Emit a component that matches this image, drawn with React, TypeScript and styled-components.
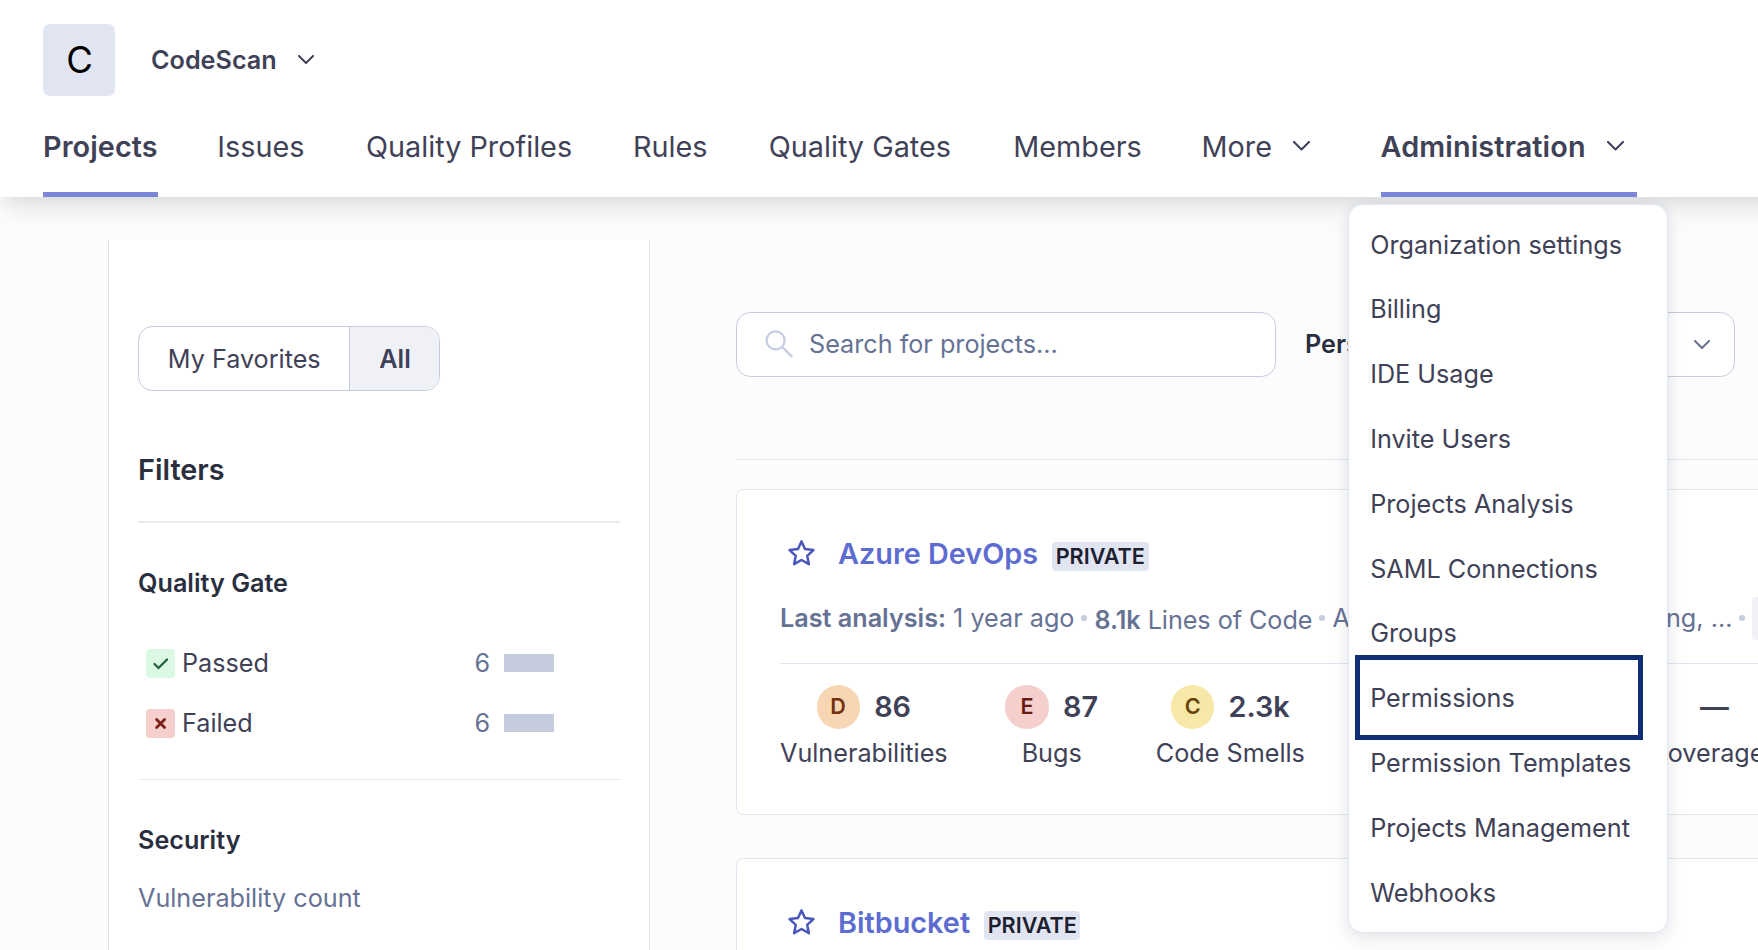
import React from 'react';
import styled, { createGlobalStyle, css } from 'styled-components';

const GlobalStyle = createGlobalStyle`
  *, *::before, *::after { box-sizing: border-box; }
  html, body { margin: 0; padding: 0; }
  body {
    width: 1758px;
    height: 950px;
    overflow: hidden;
    background: #fcfcfd;
    font-family: Inter, "Liberation Sans", sans-serif;
    font-size: 25.2px;
    line-height: 36px;
    color: #3f4257;
  }
`;

const Page = styled.div`
  width: 1758px;
  height: 950px;
  overflow: hidden;
  display: flex;
  flex-direction: column;
`;

const Header = styled.header`
  flex: none;
  width: 1820px;
  height: 197px;
  background: #fff;
  padding: 24px 43px 0;
  box-shadow: 0 20px 25px -5px rgba(29, 33, 47, 0.05), 0 8px 20px -5px rgba(29, 33, 47, 0.13);
  display: flex;
  flex-direction: column;
  justify-content: space-between;
  position: relative;
  z-index: 1;
`;

const OrgRow = styled.div`
  display: flex;
  align-items: center;
  height: 72px;
`;

const OrgLogo = styled.div`
  width: 72px;
  height: 72px;
  padding-left: 1px;
  border-radius: 7px;
  background: #e1e5f2;
  color: #000;
  font-size: 36.5px;
  display: flex;
  align-items: center;
  justify-content: center;
`;

const OrgName = styled.span`
  margin: 0 21px 0 36px;
  font-weight: 600;
`;

const Nav = styled.nav`
  display: flex;
  height: 101px;
`;

const NavItem = styled.a<{ $active?: boolean; $gap?: number }>`
  position: relative;
  display: flex;
  align-items: center;
  height: 101px;
  margin-right: ${(p) => p.$gap ?? 57.6}px;
  font-size: 28.8px;
  white-space: nowrap;
  border-bottom: 5px solid ${(p) => (p.$active ? '#7b87d6' : 'transparent')};
  font-weight: ${(p) => (p.$active ? 600 : 400)};
`;

const NavLabel = styled.span<{ $wide?: boolean }>`
  display: block;
  margin-top: 5px;
  ${(p) => p.$wide && css`letter-spacing: 0.1px;`}
`;

const NavChevron = styled.span`
  display: flex;
  margin: 3px 13px 0 21px;
`;

const Menu = styled.div`
  position: absolute;
  z-index: 2;
  left: -33px;
  top: 108px;
  width: 320px;
  padding: 7.2px 0;
  background: #fff;
  border: 1px solid #e1e6f3;
  border-radius: 14.4px;
  box-shadow: 0 8px 22px rgba(29, 33, 47, 0.08), 0 2px 12px rgba(29, 33, 47, 0.06);
  font-size: 25.2px;
  font-weight: 400;
`;

const MenuItem = styled.div`
  display: flex;
  align-items: center;
  height: 64.8px;
  padding-left: 21.6px;
  position: relative;
`;

const Highlight = styled.span`
  position: absolute;
  left: 6px;
  top: -11px;
  width: 288px;
  height: 85px;
  border: 5px solid #102d75;
`;

const Body = styled.div`
  flex: 1;
  display: flex;
  min-height: 0;
`;

const Sidebar = styled.aside`
  flex: none;
  width: 542px;
  margin: 43px 0 0 108px;
  padding: 86px 29px 0;
  background: #fff;
  border: solid #e1e3f0;
  border-width: 0 1px;
`;

const Toggle = styled.div`
  display: inline-flex;
  height: 65px;
  border: 1px solid #c5cddf;
  border-radius: 14.4px;
  overflow: hidden;
  vertical-align: top;
`;

const ToggleOption = styled.span<{ $selected?: boolean }>`
  display: flex;
  align-items: center;
  padding: 0 28.8px;
  ${(p) =>
    p.$selected &&
    css`
      padding-right: 28px;
      background: #f0f1f7;
      border-left: 1px solid #c5cddf;
      font-weight: 600;
    `}
`;

const FiltersTitle = styled.h2`
  margin: 61px 0 0;
  font-size: 28.8px;
  line-height: 36px;
  font-weight: 600;
  color: #2a2f40;
`;

const Rule = styled.hr<{ $thick?: boolean; $top: number }>`
  height: ${(p) => (p.$thick ? 2 : 1)}px;
  margin: ${(p) => p.$top}px 0 0;
  border: 0;
  background: #e9eaec;
`;

const FacetTitle = styled.h3`
  margin: 42px 0 0;
  font-size: 25.2px;
  line-height: 36px;
  font-weight: 600;
  color: #2a2f40;
`;

const FacetList = styled.div`
  margin-top: 32px;
`;

const FacetRow = styled.div`
  display: flex;
  align-items: center;
  height: 60px;
  padding: 0 66px 0 8px;
`;

const GateIcon = styled.span<{ $ok?: boolean }>`
  width: 29px;
  height: 29px;
  border-radius: 4px;
  background: ${(p) => (p.$ok ? '#dbf9e2' : '#f5cfcb')};
  display: flex;
  margin-right: 7px;
`;

const Count = styled.span`
  margin-left: auto;
  color: #667294;
`;

const Bar = styled.span`
  width: 50px;
  height: 18px;
  margin-left: 14px;
  background: #c5ccdd;
`;

const Subdued = styled.div`
  margin-top: 22px;
  color: #667294;
`;

const Main = styled.main`
  flex: none;
  width: 1200px;
  margin-left: 86px;
  padding-top: 115px;
`;

const Controls = styled.div`
  display: flex;
  align-items: center;
  height: 65px;
`;

const SearchBox = styled.div`
  display: flex;
  align-items: center;
  gap: 16px;
  width: 540px;
  height: 65px;
  padding: 0 0 1px 28px;
  border: 1px solid #c5cddf;
  border-radius: 14.4px;
  background: #fff;
  color: #667294;
`;

const ControlLabel = styled.span`
  width: 179px;
  margin: -2px 0 0 29px;
  font-weight: 600;
  color: #2a2f40;
`;

const Select = styled.div`
  display: flex;
  align-items: center;
  justify-content: space-between;
  width: 251px;
  height: 65px;
  padding: 0 24px 0 28px;
  border: 1px solid #c5cddf;
  border-radius: 14.4px;
  background: #fff;
`;

const ListRule = styled.hr`
  height: 1px;
  margin: 82px 0 29px;
  border: 0;
  background: #e1e4f0;
`;

const Card = styled.article`
  height: 326px;
  margin-bottom: 43px;
  padding: 42px 43px 0;
  border: 1px solid #e1e4f0;
  border-radius: 7.2px;
  background: #fff;
`;

const CardHead = styled.div`
  display: flex;
  align-items: center;
  height: 44px;
  padding-left: 8px;
`;

const CardTitle = styled.a`
  margin: 0 14px 0 22px;
  font-size: 28.8px;
  font-weight: 600;
  color: #5d6cd0;
`;

const Badge = styled.span`
  height: 29px;
  margin-top: 5px;
  padding: 0 3.6px;
  border-radius: 4px;
  background: #e1e5f2;
  color: #1d212f;
  font-size: 21.6px;
  line-height: 29px;
  font-weight: 600;
`;

const Meta = styled.div`
  display: flex;
  align-items: center;
  height: 44px;
  margin-top: 20px;
  color: #667294;
  white-space: nowrap;
  b { font-weight: 600; }
`;

const MetaSize = styled.span`
  padding-top: 3px;
  letter-spacing: -0.05px;
`;

const Dot = styled.i`
  flex: none;
  width: 6px;
  height: 6px;
  margin: 0 7px;
  border-radius: 50%;
  background: #c5cddf;
`;

const Tags = styled.span`
  width: 400px;
  display: flex;
  justify-content: space-between;
`;

const LanguageTag = styled.span`
  width: 80px;
  height: 43px;
  border-radius: 4px;
  background: #f0f1f7;
`;

const Measures = styled.div`
  display: flex;
  gap: 57.8px;
  margin-top: 23px;
  padding-top: 21px;
  border-top: 1px solid #e1e4f0;
`;

const Measure = styled.div`
  display: flex;
  flex-direction: column;
  align-items: center;
  white-space: nowrap;
`;

const MeasureValue = styled.div<{ $shift?: boolean }>`
  display: flex;
  align-items: center;
  gap: 14.4px;
  height: 44px;
  padding-left: ${(p) => (p.$shift ? 15 : 0)}px;
  font-size: 28.8px;
  font-weight: 600;
`;

const MeasureLabel = styled.div`
  margin-top: 6px;
`;

const ratingColors: Record<string, [string, string]> = {
  C: ['#f8e8a8', '#66440a'],
  D: ['#f7d6b3', '#74300f'],
  E: ['#f5cfcb', '#651b14'],
};

const Rating = styled.span<{ $grade: string }>`
  width: 43.2px;
  height: 43.2px;
  border-radius: 50%;
  background: ${(p) => ratingColors[p.$grade][0]};
  color: ${(p) => ratingColors[p.$grade][1]};
  font-size: 21.6px;
  line-height: 43px;
  text-align: center;
`;

const Chevron = ({ width = 17, color = '#3f4257' }: { width?: number; color?: string }) => (
  <svg width={width} height={(width * 10) / 17} viewBox="0 0 17 10" fill="none">
    <path d="M1 1l7.5 7.5L16 1" stroke={color} strokeWidth="2.1" strokeLinecap="round" strokeLinejoin="round" />
  </svg>
);

const SearchIcon = () => (
  <svg width="28" height="28" viewBox="0 0 28 28" fill="none" stroke="#c5cddf" strokeWidth="2.3" strokeLinecap="round">
    <circle cx="10.6" cy="10.4" r="9" />
    <path d="M17.2 17l9.4 9.4" />
  </svg>
);

const Star = () => (
  <svg width="28" height="28" viewBox="0 0 28 28" fill="none">
    <path
      d="M13.5 1.4L17 9.1l8.4 1-6.2 5.7 1.7 8.4-7.4-4.2-7.4 4.2 1.700-8.400L1.600 10.100l8.400-1z"
      stroke="#4b56bb"
      strokeWidth="2.5"
      strokeLinejoin="round"
    />
  </svg>
);

const CheckMark = () => (
  <svg width="29" height="29" viewBox="0 0 29 29" fill="none">
    <path d="M8.5 15l4 4 8.5-8.5" stroke="#215a3c" strokeWidth="2.2" strokeLinecap="round" />
  </svg>
);

const CrossMark = () => (
  <svg width="29" height="29" viewBox="0 0 29 29" fill="none">
    <path d="M10.6 10.4l8 8M18.6 10.4l-8 8" stroke="#7a2018" strokeWidth="2.8" strokeLinecap="round" />
  </svg>
);

const menuItems = [
  'Organization settings',
  'Billing',
  'IDE Usage',
  'Invite Users',
  'Projects Analysis',
  'SAML Connections',
  'Groups',
  'Permissions',
  'Permission Templates',
  'Projects Management',
  'Webhooks',
];

const navItems = [
  { label: 'Issues', gap: 61.6 },
  { label: 'Quality Profiles', gap: 60.9 },
  { label: 'Rules', gap: 61.2 },
  { label: 'Quality Gates', gap: 62.3 },
  { label: 'Members', gap: 59.8 },
];

const measures = [
  { grade: 'D', value: '86', label: 'Vulnerabilities' },
  { grade: 'E', value: '87', label: 'Bugs' },
  { grade: 'C', value: '2.3k', label: 'Code Smells' },
  { grade: 'E', value: '0.0%', label: 'Hotspots Reviewed' },
  { grade: '', value: '—', label: 'Coverage' },
];

const ProjectCard = ({ name }: { name: string }) => (
  <Card>
    <CardHead>
      <Star />
      <CardTitle>{name}</CardTitle>
      <Badge>PRIVATE</Badge>
    </CardHead>
    <Meta>
      <span><b>Last analysis:</b> 1 year ago</span>
      <Dot />
      <MetaSize><b>8.1k</b> Lines of Code</MetaSize>
      <Dot />
      <Tags><span>Apex, Flow,</span><span>Lightning, ...</span></Tags>
      <Dot />
      <LanguageTag />
    </Meta>
    <Measures>
      {measures.map((m) => (
        <Measure key={m.label}>
          <MeasureValue $shift={!m.grade}>
            {m.grade && <Rating $grade={m.grade}>{m.grade}</Rating>}
            {m.value}
          </MeasureValue>
          <MeasureLabel>{m.label}</MeasureLabel>
        </Measure>
      ))}
    </Measures>
  </Card>
);

export default function App() {
  return (
    <Page>
      <GlobalStyle />
      <Header>
        <OrgRow>
          <OrgLogo>C</OrgLogo>
          <OrgName>CodeScan</OrgName>
          <Chevron width={16} />
        </OrgRow>
        <Nav>
          <NavItem $active $gap={59.5}><NavLabel $wide>Projects</NavLabel></NavItem>
          {navItems.map((n) => (
            <NavItem key={n.label} $gap={n.gap}><NavLabel>{n.label}</NavLabel></NavItem>
          ))}
          <NavItem>
            <NavLabel>More</NavLabel>
            <NavChevron><Chevron /></NavChevron>
          </NavItem>
          <NavItem $active>
            <NavLabel $wide>Administration</NavLabel>
            <NavChevron><Chevron /></NavChevron>
            <Menu>
              {menuItems.map((item) => (
                <MenuItem key={item}>
                  {item}
                  {item === 'Permissions' && <Highlight />}
                </MenuItem>
              ))}
            </Menu>
          </NavItem>
        </Nav>
      </Header>
      <Body>
        <Sidebar>
          <Toggle>
            <ToggleOption>My Favorites</ToggleOption>
            <ToggleOption $selected>All</ToggleOption>
          </Toggle>
          <FiltersTitle>Filters</FiltersTitle>
          <Rule $thick $top={33} />
          <FacetTitle>Quality Gate</FacetTitle>
          <FacetList>
            <FacetRow>
              <GateIcon $ok><CheckMark /></GateIcon>
              Passed
              <Count>6</Count>
              <Bar />
            </FacetRow>
            <FacetRow>
              <GateIcon><CrossMark /></GateIcon>
              Failed
              <Count>6</Count>
              <Bar />
            </FacetRow>
          </FacetList>
          <Rule $top={26} />
          <FacetTitle>Security</FacetTitle>
          <Subdued>Vulnerability count</Subdued>
        </Sidebar>
        <Main>
          <Controls>
            <SearchBox><SearchIcon />Search for projects...</SearchBox>
            <ControlLabel>Perspective</ControlLabel>
            <Select>Overall<Chevron width={16} color="#667294" /></Select>
          </Controls>
          <ListRule />
          <ProjectCard name="Azure DevOps" />
          <ProjectCard name="Bitbucket" />
        </Main>
      </Body>
    </Page>
  );
}
